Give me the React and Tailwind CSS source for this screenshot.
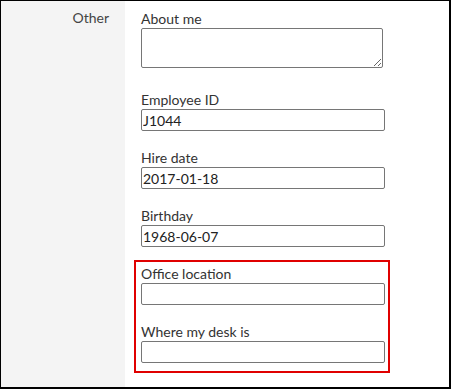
import React from 'react';

const fields = [
  { label: 'Employee ID', value: 'J1044' },
  { label: 'Hire date', value: '2017-01-18' },
  { label: 'Birthday', value: '1968-06-07' },
];

const Field = ({ label, value }) => (
  <div className="flex flex-col">
    <label className="h-[18px] leading-[18px] text-[14px] text-[#333]">{label}</label>
    <input
      type="text"
      defaultValue={value}
      className="w-[244px] h-[22px] border border-[#767676] rounded-[2px] px-[1px] text-[14px] text-[#222] bg-white outline-none"
    />
  </div>
);

const App = () => {
  return (
    <div
      className="w-[451px] h-[389px] flex border-t border-l border-r-2 border-b-2 border-black bg-white overflow-hidden"
      style={{ fontFamily: '"Source Sans Pro", Lato, "Noto Sans", sans-serif' }}
    >
      <div className="w-[124px] bg-[#f4f4f4] text-right pr-[16px] pt-[8px]">
        <div className="leading-[18px] text-[14px] text-[#444]">Other</div>
      </div>

      <div className="flex-1 pl-[16px] pt-[8px]">
        <div className="flex flex-col mb-[23px]">
          <label className="h-[19px] leading-[19px] text-[14px] text-[#333]">About me</label>
          <textarea className="block w-[242px] h-[40px] border border-[#767676] rounded-[2px] bg-white outline-none" />
        </div>

        <div className="flex flex-col gap-[18px]">
          {fields.map((f) => (
            <Field key={f.label} label={f.label} value={f.value} />
          ))}
        </div>

        <div className="mt-[13px] -ml-[7px] w-[256px] border-2 border-[#e00000] pt-[3px] pl-[5px] pb-[8px] flex flex-col gap-[18px]">
          <Field label="Office location" value="" />
          <Field label="Where my desk is" value="" />
        </div>
      </div>
    </div>
  );
};

export default App;
